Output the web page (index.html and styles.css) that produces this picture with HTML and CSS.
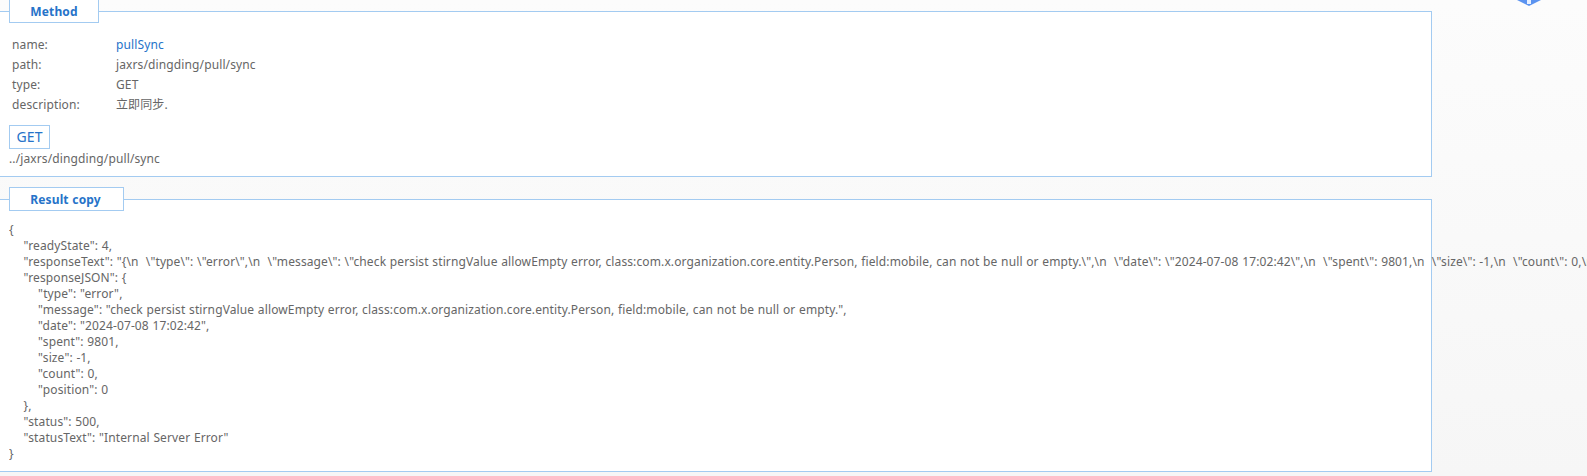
FILE: index.html
```html
<!DOCTYPE html>
<html lang="en">
<head>
<meta charset="utf-8">
<title>Method</title>
<link rel="stylesheet" href="styles.css">
</head>
<body>
<svg class="corner-icon" width="24" height="6" viewBox="0 0 24 6"><path d="M0 0H24L16 4L12 6L8 4Z" fill="#5b93f0"/><rect x="10" y="0" width="4" height="4" fill="#e8f0fe"/></svg>
<main class="page">
  <section class="panel method-panel">
    <h2 class="legend method-legend">Method</h2>
    <dl class="meta">
      <dt>name:</dt><dd class="accent">pullSync</dd>
      <dt>path:</dt><dd>jaxrs/dingding/pull/sync</dd>
      <dt>type:</dt><dd>GET</dd>
      <dt>description:</dt><dd>立即同步.</dd>
    </dl>
    <div class="verb">GET</div>
    <div class="url">../jaxrs/dingding/pull/sync</div>
  </section>
  <section class="panel result-panel">
    <h2 class="legend result-legend">Result copy</h2>
<pre class="json">{
    "readyState": 4,
    "responseText": "{\n  \"type\": \"error\",\n  \"message\": \"check persist stirngValue allowEmpty error, class:com.x.organization.core.entity.Person, field:mobile, can not be null or empty.\",\n  \"date\": \"2024-07-08 17:02:42\",\n  \"spent\": 9801,\n  \"size\": -1,\n  \"count\": 0,\n  \"position\": 0\n}",
    "responseJSON": {
        "type": "error",
        "message": "check persist stirngValue allowEmpty error, class:com.x.organization.core.entity.Person, field:mobile, can not be null or empty.",
        "date": "2024-07-08 17:02:42",
        "spent": 9801,
        "size": -1,
        "count": 0,
        "position": 0
    },
    "status": 500,
    "statusText": "Internal Server Error"
}</pre>
  </section>
</main>
</body>
</html>
```
FILE: styles.css
```css
* { box-sizing: border-box; }
html, body { margin: 0; height: 476px; overflow: hidden; }
body {
  background: linear-gradient(#fcfcfc, #f6f6f6);
  color: #666;
  font: 12px/20px "Noto Sans", "Noto Sans CJK SC", sans-serif;
  letter-spacing: .12px;
  word-spacing: .4px;
  position: relative;
}
.corner-icon { position: absolute; left: 1517px; top: 0; }
.page { width: 1432px; padding-top: 11px; display: flex; flex-direction: column; gap: 22px; }
.panel {
  background: #fff;
  border: 1px solid #a3cbf1;
  border-left: 0;
  position: relative;
}
.method-panel { height: 166px; padding: 23px 0 0 9px; }
.result-panel { height: 273px; padding: 22px 0 0 9px; }
.legend {
  position: absolute;
  left: 9px;
  margin: 0;
  background: #fff;
  border: 1px solid #a3cbf1;
  color: #2673c9;
  font-size: 12px;
  font-weight: 700;
  text-align: center;
  line-height: 23px;
}
.method-legend { top: -12px; width: 90px; height: 23px; border-top: 0; }
.result-legend { top: -13px; width: 115px; height: 24px; padding-right: 2px; }
.meta {
  margin: 0 0 0 3px;
  display: grid;
  grid-template-columns: 104px 1fr;
  grid-auto-rows: 20px;
}
.meta dt, .meta dd { margin: 0; }
.accent { color: #2673c9; }
.verb {
  margin-top: 10px;
  width: 41px;
  height: 24px;
  border: 1px solid #a3cbf1;
  color: #2673c9;
  font-size: 14px;
  line-height: 22px;
  text-align: center;
}
.url { line-height: 20px; }
.json {
  margin: 0;
  width: 1578px;
  overflow: hidden;
  font: inherit;
  line-height: 16px;
  white-space: pre;
}
```
